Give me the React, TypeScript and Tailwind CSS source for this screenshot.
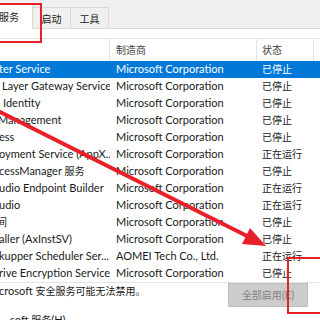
const rows = [
  { name: "ter Service", off: "ml-[-1px]", maker: "Microsoft Corporation", status: "已停止", selected: true },
  { name: "Layer Gateway Service", off: "ml-[2px]", maker: "Microsoft Corporation", status: "已停止" },
  { name: "Identity", off: "ml-[3px]", maker: "Microsoft Corporation", status: "已停止" },
  { name: "Management", off: "ml-[-2px]", maker: "Microsoft Corporation", status: "已停止" },
  { name: "ess", off: "ml-[-1px]", maker: "Microsoft Corporation", status: "已停止" },
  { name: "oyment Service (AppX...", off: "ml-[-1px]", maker: "Microsoft Corporation", status: "正在运行" },
  { name: "cessManager 服务", off: "ml-[-1px]", maker: "Microsoft Corporation", status: "已停止" },
  { name: "udio Endpoint Builder", off: "ml-[-1px]", maker: "Microsoft Corporation", status: "正在运行" },
  { name: "udio", off: "ml-[-1px]", maker: "Microsoft Corporation", status: "正在运行" },
  { name: "间", off: "ml-[-3px]", maker: "Microsoft Corporation", status: "已停止" },
  { name: "aller (AxInstSV)", off: "ml-[-1px]", maker: "Microsoft Corporation", status: "已停止" },
  { name: "kupper Scheduler Ser...", off: "ml-[-1px]", maker: "AOMEI Tech Co., Ltd.", status: "正在运行" },
  { name: "rive Encryption Service", off: "ml-[-1px]", maker: "Microsoft Corporation", status: "已停止" },
]

// CJK glyphs in the shot are narrower than the latin text size, so size them apart
function T({ children }: { children: string }) {
  const parts = children.split(/([\u3000-\u9fff\uff00-\uffef]+)/)
  return (
    <>
      {parts.map((p, i) =>
        i % 2 === 1 ? (
          <span key={i} className="text-[10px]">
            {p}
          </span>
        ) : (
          p
        )
      )}
    </>
  )
}

export default function App() {
  return (
    <div
      className="relative w-[320px] h-[320px] overflow-hidden bg-white text-[11px] text-[#1a1a1a]"
      style={{ fontFamily: '"Lato", "Noto Sans CJK SC", sans-serif' }}
    >
      {/* tab strip */}
      <div className="h-[29px] bg-[#f0f0f0] border-b border-[#d9d9d9] flex items-end">
        <div className="w-[33px] h-[26px] bg-white border-r border-[#d9d9d9] -mb-px flex items-center">
          <span className="-ml-[1px] pt-[3px]">
            <T>服务</T>
          </span>
        </div>
        <div className="w-[38px] h-[21px] border-r border-t border-[#d9d9d9] flex items-center justify-center pt-[3px]">
          <T>启动</T>
        </div>
        <div className="w-[38px] h-[21px] border-r border-t border-[#d9d9d9] flex items-center justify-center pt-[3px]">
          <T>工具</T>
        </div>
      </div>

      {/* list */}
      <div className="mt-[9px] border-t border-b border-[#e3e3e3]">
        <div className="grid grid-cols-[110px_147px_57px_6px] h-[22px] text-[#3c3c3c]">
          <div className="border-r border-[#e5e5e5]" />
          <div className="border-r border-[#e5e5e5] pl-[6px] flex items-center">
            <T>制造商</T>
          </div>
          <div className="border-r border-[#e5e5e5] pl-[5px] flex items-center">
            <T>状态</T>
          </div>
          <div />
        </div>
        {rows.map((r) => (
          <div
            key={r.name}
            className={`grid grid-cols-[110px_147px_63px] h-[17px] items-center whitespace-nowrap ${
              r.selected ? "bg-[#0078d7] text-white" : ""
            }`}
          >
            <div className="overflow-hidden">
              <div className={r.off}>
                <T>{r.name}</T>
              </div>
            </div>
            <div className="pl-[6px] overflow-hidden">{r.maker}</div>
            <div className="pl-[5px] overflow-hidden">
              <T>{r.status}</T>
            </div>
          </div>
        ))}
      </div>

      {/* footer */}
      <div className="flex justify-between items-start">
        <div className="-ml-[1px] whitespace-nowrap">
          <T>crosoft 安全服务可能无法禁用。</T>
        </div>
        <div className="mr-[12px] w-[80px] h-[24px] bg-[#cccccc] border border-[#bfbfbf] flex items-center justify-center text-[#838383]">
          <T>全部启用(E)</T>
        </div>
      </div>
      <div className="mt-[5px] ml-[10px] whitespace-nowrap">
        <T>soft 服务(H)</T>
      </div>

      {/* annotations */}
      <svg className="absolute inset-0 pointer-events-none" width="320" height="320" viewBox="0 0 320 320">
        <rect x="-10" y="4" width="51" height="38" fill="none" stroke="#e8202a" strokeWidth="2" />
        <rect x="288" y="258" width="50" height="55" fill="none" stroke="#e8202a" strokeWidth="2" />
        <line x1="-4" y1="110" x2="247" y2="236" stroke="#e8202a" strokeWidth="4" />
        <polygon points="266,246 242,244 250,228" fill="#e8202a" />
      </svg>
    </div>
  )
}
